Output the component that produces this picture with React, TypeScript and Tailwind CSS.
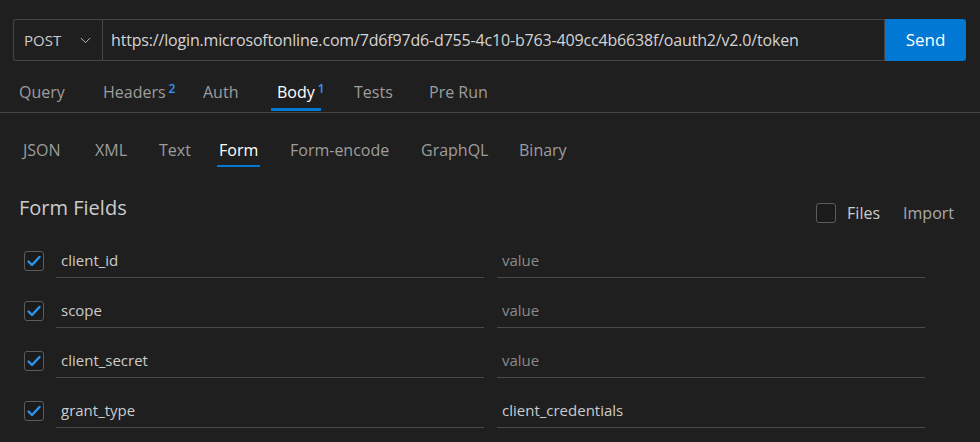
import { ChevronDown } from 'lucide-react'
import { clsx } from 'clsx'

const tabs = [
  { label: 'Query', w: 'w-[84px]' },
  { label: 'Headers', badge: '2', w: 'w-[100px]' },
  { label: 'Auth', w: 'w-[74px]' },
  { label: 'Body', badge: '1', active: true, w: 'w-[50px] mr-[27px]' },
  { label: 'Tests', w: 'w-[75px]' },
  { label: 'Pre Run', w: 'w-[80px]' },
]

const bodyTabs = [
  { label: 'JSON', w: 'w-[72px]' },
  { label: 'XML', w: 'w-[64px]' },
  { label: 'Text', w: 'w-[60px]' },
  { label: 'Form', w: 'w-[43px] mr-[28px]', active: true },
  { label: 'Form-encode', w: 'w-[131px]' },
  { label: 'GraphQL', w: 'w-[98px]' },
  { label: 'Binary', w: 'w-[70px]' },
]

const fields = [
  { key: 'client_id', value: '' },
  { key: 'scope', value: '' },
  { key: 'client_secret', value: '' },
  { key: 'grant_type', value: 'client_credentials' },
]

function Check({ checked }: { checked?: boolean }) {
  return (
    <div className="flex h-[20px] w-[20px] shrink-0 items-center justify-center rounded-[3px] border border-[#5c5c5c] bg-[#1b1b1b]">
      {checked && (
        <svg width="16" height="16" viewBox="0 0 16 16" fill="none">
          <path d="M2.5 8.5l3.5 3.5 7.5-8" stroke="#2b95f0" strokeWidth="2.4" strokeLinecap="round" strokeLinejoin="round" />
        </svg>
      )}
    </div>
  )
}

export default function App() {
  return (
    <div className="h-[442px] w-[980px] overflow-hidden bg-[#1f1f1f] text-[16px] text-[#cccccc] font-['Open_Sans',sans-serif]">
      {/* url bar */}
      <div className="ml-[13px] mr-[14px] mt-[19px] flex h-[42px]">
        <div className="flex w-[89px] items-center justify-between rounded-l-[3px] border border-r-0 border-[#454545] pl-[10px] pr-[8px]">
          <span className="text-[15px] text-[#cccccc]">POST</span>
          <ChevronDown size={17} className="text-[#bbbbbb]" strokeWidth={1.4} />
        </div>
        <div className="flex flex-1 items-center border border-[#454545] px-[8px] text-[16px] tracking-[-0.17px] text-[#d4d4d4]">
          https://login.microsoftonline.com/7d6f97d6-d755-4c10-b763-409cc4b6638f/oauth2/v2.0/token
        </div>
        <button className="w-[81px] rounded-r-[3px] bg-[#0078d4] text-[17px] text-white">Send</button>
      </div>

      {/* request tabs */}
      <div className="flex h-[52px] items-end border-b border-[#454545] pl-[13px]">
        {tabs.map((t) => (
          <div
            key={t.label}
            className={clsx(
              'mb-[1px] flex shrink-0 whitespace-nowrap border-b-[3px] px-[6px] pb-[4px] leading-[24px]',
              t.w,
              t.active ? 'border-[#0078d4] text-white' : 'border-transparent text-[#9d9d9d]'
            )}
          >
            <span>{t.label}</span>
            {t.badge && <span className="ml-[3px] -mt-[3px] text-[12px] font-semibold text-[#3794ff]">{t.badge}</span>}
          </div>
        ))}
      </div>

      {/* body type tabs */}
      <div className="flex pl-[21px] pt-[25px]">
        {bodyTabs.map((b) => (
          <div
            key={b.label}
            className={clsx(
              'shrink-0 whitespace-nowrap border-b-2 px-[2px] pb-[3px] leading-[24px]',
              b.w,
              b.active ? 'border-[#0078d4] text-white' : 'border-transparent text-[#9d9d9d]'
            )}
          >
            {b.label}
          </div>
        ))}
      </div>

      {/* form fields */}
      <div className="mt-[27px] flex items-start justify-between pl-[19px] pr-[26px]">
        <div className="text-[20px] leading-[28px] text-[#cccccc]">Form Fields</div>
        <div className="mt-[9px] flex h-[20px] items-center">
          <Check />
          <span className="ml-[11px] text-[16px] text-[#cccccc]">Files</span>
          <span className="ml-[23px] text-[16px] text-[#aaaaaa]">Import</span>
        </div>
      </div>

      <div className="mt-[21px] flex flex-col gap-4 pl-[24px]">
        {fields.map((f) => (
          <div key={f.key} className="flex items-center">
            <Check checked />
            <div className="ml-[12px] flex h-[34px] w-[428px] items-center border-b border-[#4a4a4a] pb-[1px] pl-[5px] text-[15px] text-[#cccccc]">
              {f.key}
            </div>
            <div
              className={clsx(
                'ml-[13px] flex h-[34px] w-[428px] items-center border-b border-[#4a4a4a] pb-[1px] pl-[5px] text-[15px]',
                f.value ? 'text-[#cccccc]' : 'text-[#8a8a8a]'
              )}
            >
              {f.value || 'value'}
            </div>
          </div>
        ))}
      </div>
    </div>
  )
}
